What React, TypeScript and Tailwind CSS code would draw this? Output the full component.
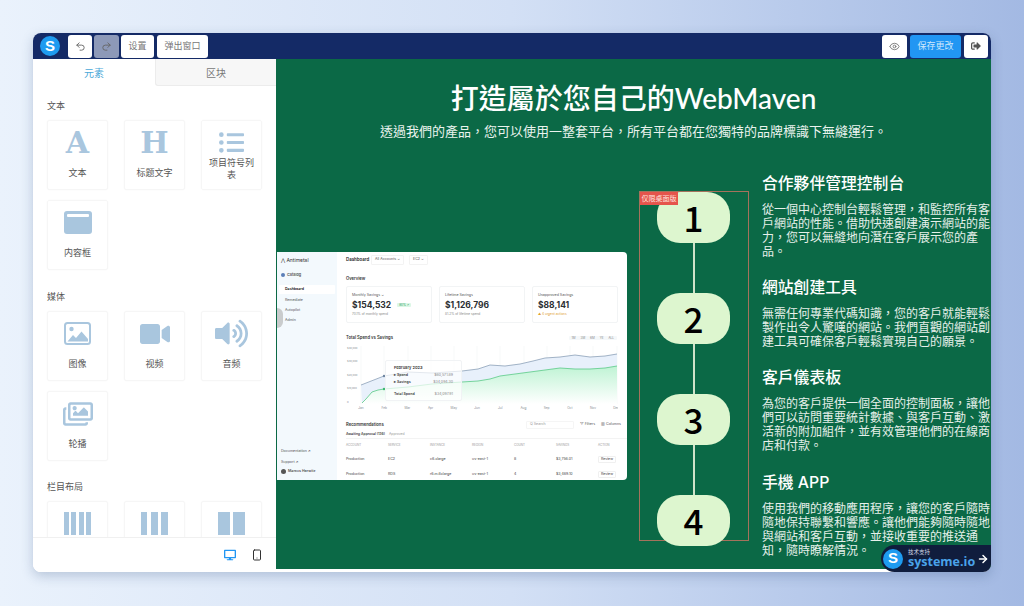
import { Smartphone, Undo2, Redo2, ArrowRight, Eye } from "lucide-react";
import { FaDesktop, FaRegImages, FaListUl, FaSignOutAlt, FaVideo, FaVolumeUp } from "react-icons/fa";
import type { ReactNode } from "react";

const iconColor = "text-[#a9c6de]";

function Logo({ size }: { size: string }) {
  return (
    <div className={`flex shrink-0 items-center justify-center rounded-full bg-[#1e9bf0] font-['Liberation_Sans',sans-serif] font-bold text-white ${size}`}>
      S
    </div>
  );
}

function ImageIcon() {
  return (
    <svg viewBox="0 0 27 23" className="h-[23px] w-[27px]" fill="currentColor">
      <rect x="1" y="1" width="25" height="21" rx="2.5" fill="none" stroke="currentColor" strokeWidth="2" />
      <circle cx="7.5" cy="7" r="2.2" />
      <path d="M3.5 19.5 L9 13 L12 16 L17.5 9.5 L24 17 V19.5 Z" />
    </svg>
  );
}

function Bars({ widths }: { widths: number[] }) {
  return (
    <div className="flex h-[23px] w-[27px] justify-between">
      {widths.map((w, i) => (
        <div key={i} className="h-full bg-[#a9c6de]" style={{ width: w }} />
      ))}
    </div>
  );
}

function Card({ icon, label }: { icon: ReactNode; label?: string }) {
  return (
    <div className="flex h-[70px] w-[61px] flex-col items-center rounded-[2px] border border-[#f6f6f6] pt-[9px] shadow-[0_0_2px_rgba(0,0,0,0.03)]">
      <div className={`flex h-[25px] items-center justify-center ${iconColor}`}>{icon}</div>
      {label && (
        <div className="mt-[12px] w-[52px] text-center text-[9px] leading-[12px] text-[#555]">{label}</div>
      )}
    </div>
  );
}

function Section({ title, children, className }: { title: string; children: ReactNode; className: string }) {
  return (
    <div className={className}>
      <div className="mb-[8px] h-[12px] text-[9px] leading-[12px] text-[#555]">{title}</div>
      <div className="grid w-[215px] grid-cols-[61px_61px_61px] gap-x-[16px] gap-y-[10px]">{children}</div>
    </div>
  );
}

function TopButton({ children, className = "bg-white text-[#777]" }: { children: ReactNode; className?: string }) {
  return (
    <div className={`flex h-[23px] items-center justify-center rounded-[3px] text-[9px] ${className}`}>{children}</div>
  );
}

function Sidebar() {
  return (
    <div className="flex h-full w-[60px] shrink-0 flex-col bg-[#f3f9fd] pb-[6px] pl-[4px] text-[3.6px] text-[#555]">
      <div className="mt-[5px] h-[6px] text-[5px] leading-[6px] text-[#333]">⋀ Antimetal</div>
      <div className="mt-[9px] flex h-[6px] items-center gap-[2px] text-[3.8px] font-semibold">
        <span className="h-[4px] w-[4px] rounded-full bg-[#5b7fb8]" /> Catalog
      </div>
      <div className="mt-[7px] -ml-[2px] flex h-[9px] w-[56px] items-center rounded-[1px] bg-white pl-[6px] font-semibold text-[#222]">Dashboard</div>
      <div className="mt-[2px] h-[8px] pl-[4px] leading-[8px]">Remediate</div>
      <div className="mt-[2px] h-[8px] pl-[4px] leading-[8px]">Autopilot</div>
      <div className="mt-[2px] h-[8px] pl-[4px] leading-[8px]">Admin</div>
      <div className="mt-auto leading-[6px]">Documentation ↗</div>
      <div className="mt-[5px] leading-[6px]">Support ↗</div>
      <div className="mt-[4px] flex items-center gap-[2px] font-semibold">
        <span className="h-[5px] w-[5px] rounded-full bg-[#555]" /> Marcus Horwitz
      </div>
    </div>
  );
}

function Stat({ label, value, note, tag, noteClass }: { label: string; value: string; note: string; tag?: string; noteClass: string }) {
  return (
    <div className="h-[37px] w-[86px] rounded-[2px] border border-[#f2f4f5] px-[5px] pt-[6px]">
      <div className="text-[3.6px] leading-[5px] text-[#555]">{label}</div>
      <div className="mt-[2px] flex items-center gap-[6px]">
        <span className="text-[8.5px] leading-[10px] font-bold text-[#2c2f33]">{value}</span>
        {tag && <span className="rounded-[1px] bg-[#dcf7e6] px-[2px] text-[3px] text-[#2a9d5c]">{tag}</span>}
      </div>
      <div className={`mt-[2px] text-[3.2px] leading-[5px] ${noteClass}`}>{note}</div>
    </div>
  );
}

function Chart() {
  const blue = "M361 385 L384 376 L408 372 L432 373 L462 371 L478 369 L490 365 L505 366 L520 364 L533 361 L545 358 L560 357 L575 355 L590 357 L605 356 L617 354";
  const green = "M362 403 L366 399 L372 392 L378 390 L384 389 L408 387 L432 384 L462 382 L478 381 L490 379 L500 376 L515 374 L530 372 L545 370 L560 368 L575 369 L590 369 L605 368 L617 366";
  return (
    <svg viewBox="346 345 272 68" className="mt-[4px] h-[68px] w-[272px] shrink-0" fontFamily="Inter" fontSize="3.2" fill="#8a8f96">
      <defs>
        <linearGradient id="greenFill" x1="0" y1="0" x2="0" y2="1">
          <stop offset="0" stopColor="#bff3d4" />
          <stop offset="1" stopColor="#ffffff" />
        </linearGradient>
      </defs>
      {[["$40,000", 349], ["$30,000", 362], ["$20,000", 376], ["$10,000", 389], ["0", 403]].map(([t, y]) => (
        <text key={t} x="347" y={y} fontSize="2.6">{t}</text>
      ))}
      {[361, 384, 408, 431, 454, 477, 500, 524, 547, 570, 593, 617].map((x) => (
        <line key={x} x1={x} x2={x} y1="346" y2="404" stroke="#eef1f3" strokeWidth="0.5" />
      ))}
      <path d={`${blue} L617 366 L605 368 L590 369 L575 369 L560 368 L545 370 L530 372 L515 374 L500 376 L490 379 L478 381 L462 382 L432 384 L408 387 L384 389 L362 403 Z`} fill="#e8f0fb" />
      <path d={`${green} L617 404 L362 404 Z`} fill="url(#greenFill)" />
      <path d={blue} fill="none" stroke="#7d93ad" strokeWidth="0.7" />
      <path d={green} fill="none" stroke="#58c987" strokeWidth="0.8" />
      {["Jan", "Feb", "Mar", "Apr", "May", "Jun", "Jul", "Aug", "Sep", "Oct", "Nov", "Dec"].map((m, i) => (
        <text key={m} x={361 + i * 23.2} y="409" textAnchor="middle">{m}</text>
      ))}
      <circle cx="384" cy="376" r="1.2" fill="#6f86a0" />
      <circle cx="384" cy="389" r="1.2" fill="#3fb873" />
    </svg>
  );
}

function ChartTooltip() {
  const items = [
    ["▸ Spend", "$60,571.89"],
    ["▸ Savings", "$34,094.30"],
  ];
  return (
    <div className="absolute left-[108px] top-[108px] flex h-[41px] w-[77px] flex-col rounded-[2px] border border-[#f1f3f5] bg-white/70 px-[8px] pt-[3px] text-[3.6px] text-[#444]">
      <div className="text-[4px] font-semibold leading-[7px] text-[#333]">February 2023</div>
      {items.map(([k, v]) => (
        <div key={k} className="mt-[1px] flex justify-between leading-[6px]">
          <span className="font-semibold">{k}</span>
          <span className="text-[#888]">{v}</span>
        </div>
      ))}
      <div className="mt-[6px] flex justify-between leading-[6px]">
        <span className="font-semibold">Total Spend</span>
        <span className="text-[#888]">$34,097.91</span>
      </div>
    </div>
  );
}

function Dashboard() {
  const columns = "grid grid-cols-[repeat(6,42px)_24px]";
  const rows = [
    ["Production", "EC2", "c6.xlarge", "us-east-1", "8", "$3,756.01"],
    ["Production", "RDS", "r6.m.6xlarge", "us-east-1", "4", "$3,469.10"],
  ];
  return (
    <div className="relative ml-[1px] mt-[79px] flex h-[228px] w-[350px] shrink-0 overflow-hidden rounded-r-[4px] bg-white font-['Inter',sans-serif]">
      <Sidebar />
      <div className="flex min-w-0 flex-1 flex-col pl-[9px]">
        <div className="mt-[3px] flex h-[10px] items-center gap-[5px] text-[3.6px] text-[#555]">
          <span className="w-[20px] text-[4.4px] font-semibold text-[#222]">Dashboard</span>
          <span className="rounded-[1px] border border-[#f3f3f3] px-[3px] py-[1px]">All Accounts ⌄</span>
          <span className="rounded-[1px] border border-[#f3f3f3] px-[3px] py-[1px]">EC2 ⌄</span>
        </div>
        <div className="mt-[11px] h-[6px] text-[4.2px] leading-[6px] font-semibold text-[#333]">Overview</div>
        <div className="mt-[4px] flex gap-[7px]">
          <Stat label="Monthly Savings ⌄" value="$154,532" tag="80% ↗" note="70.1% of monthly spend" noteClass="text-[#888]" />
          <Stat label="Lifetime Savings" value="$1,126,796" note="81.2% of lifetime spend" noteClass="text-[#888]" />
          <Stat label="Unapproved Savings" value="$88,141" note="▲ 4 urgent actions" noteClass="text-[#e0a030]" />
        </div>
        <div className="mt-[12px] flex h-[6px] items-center justify-between pr-[10px]">
          <span className="text-[4.2px] font-semibold text-[#333]">Total Spend vs Savings</span>
          <span className="flex gap-[5px] rounded-[1px] bg-[#f5f8fa] px-[3px] text-[3px] text-[#888]">
            <span>1M</span><span>3M</span><span>6M</span><span>YE</span><span>ALL</span>
          </span>
        </div>
        <Chart />
        <div className="mt-[9px] flex h-[6px] items-center justify-between pr-[6px]">
          <span className="text-[4.2px] font-semibold text-[#333]">Recommendations</span>
          <span className="flex items-center gap-[6px] text-[3.6px] text-[#555]">
            <span className="w-[48px] rounded-[1px] border border-[#f5f5f5] pl-[3px] text-[#999]">Q Search</span>
            <span>▽ Filters</span>
            <span>▥ Columns</span>
          </span>
        </div>
        <div className="mt-[3px] flex h-[8px] items-center gap-[4px] border-b border-[#f3f3f3] text-[3.4px] text-[#999]">
          <span className="font-semibold text-[#444]">Awaiting Approval (136)</span>
          <span>Approved</span>
        </div>
        <div className={`${columns} mt-[3px] h-[6px] text-[3px] leading-[6px] text-[#999]`}>
          {["ACCOUNT", "SERVICE", "INSTANCE", "REGION", "COUNT", "SAVINGS", "ACTION"].map((h) => (
            <span key={h}>{h}</span>
          ))}
        </div>
        {rows.map((row, i) => (
          <div key={i} className={`${columns} mt-[8px] h-[7px] items-center text-[3.6px] text-[#444]`}>
            {row.map((c, j) => (
              <span key={j}>{c}</span>
            ))}
            <span className="w-[18px] rounded-[1px] border border-[#f0f0f0] text-center">Review</span>
          </div>
        ))}
      </div>
      <ChartTooltip />
      <div className="absolute left-0 top-[56px] h-[20px] w-[6px] rounded-r-full bg-[#c9cccd]" />
    </div>
  );
}

function Step({ n, line }: { n: number; line: boolean }) {
  return (
    <>
      <div className="flex h-[51px] w-[73px] shrink-0 items-center justify-center rounded-[23px] bg-[#ddf6cf] font-['Noto_Sans_CJK_TC',sans-serif] text-[35px] font-medium text-black">
        {n}
      </div>
      {line && <div className="h-[50px] w-[2px] shrink-0 bg-[#cfe3c9]" />}
    </>
  );
}

const features = [
  {
    title: "合作夥伴管理控制台",
    body: "從一個中心控制台輕鬆管理\uFF0C和監控所有客戶網站的性能。借助快速創建演示網站的能力\uFF0C您可以無縫地向潛在客戶展示您的產品。",
    className: "",
  },
  {
    title: "網站創建工具",
    body: "無需任何專業代碼知識\uFF0C您的客戶就能輕鬆製作出令人驚嘆的網站。我們直觀的網站創建工具可確保客戶輕鬆實現自己的願景。",
    className: "mt-[19px]",
  },
  {
    title: "客戶儀表板",
    body: "為您的客戶提供一個全面的控制面板\uFF0C讓他們可以訪問重要統計數據、與客戶互動、激活新的附加組件\uFF0C並有效管理他們的在線商店和付款。",
    className: "mt-[19px]",
  },
  {
    title: "手機 APP",
    body: "使用我們的移動應用程序\uFF0C讓您的客戶隨時隨地保持聯繫和響應。讓他們能夠隨時隨地與網站和客戶互動\uFF0C並接收重要的推送通知\uFF0C隨時瞭解情況。",
    className: "mt-[20px]",
  },
];

const subtitle = "透過我們的產品\uFF0C您可以使用一整套平台\uFF0C所有平台都在您獨特的品牌標識下無縫運行。";

export default function App() {
  return (
    <div className="h-[606px] w-full overflow-hidden bg-linear-to-r from-[#eaf2fc] via-[#d3e0f5] to-[#a3b9e3] px-[33px] pt-[33px] font-['Noto_Sans_CJK_SC',sans-serif]">
      <div className="relative flex h-[539px] w-[958px] flex-col overflow-hidden rounded-[8px] bg-white shadow-[0_4px_12px_rgba(40,70,120,0.25)]">
        <header className="flex h-[26px] shrink-0 items-center bg-[#142a66] pl-[7px] pr-[3px]">
          <Logo size="h-[20px] w-[20px] text-[15px]" />
          <div className="ml-[8px] flex gap-[2px]">
            <TopButton className="w-[24px] bg-white text-[#666]"><Undo2 size={11} /></TopButton>
            <TopButton className="w-[25px] bg-[#8d99b8] text-[#666]"><Redo2 size={11} /></TopButton>
            <TopButton className="w-[33px] bg-white text-[#777]">设置</TopButton>
            <TopButton className="ml-[1px] w-[51px] bg-white text-[#777]">弹出窗口</TopButton>
          </div>
          <div className="ml-auto flex gap-[3px]">
            <TopButton className="w-[25px] bg-white text-[#777]"><Eye size={11} /></TopButton>
            <TopButton className="w-[51px] bg-[#2196f3] text-[#cfe8fb]">保存更改</TopButton>
            <TopButton className="w-[24px] bg-white text-[#555]"><FaSignOutAlt size={10} /></TopButton>
          </div>
        </header>

        <div className="flex min-h-0 flex-1">
          <aside className="flex w-[243px] shrink-0 flex-col bg-white">
            <div className="flex h-[27px] shrink-0 text-[10px]">
              <div className="flex w-[122px] items-center justify-center text-[#4aa8d8]">元素</div>
              <div className="flex flex-1 items-center justify-center rounded-bl-[3px] border-b border-l border-[#ececec] bg-[#f7f7f7] text-[#777]">区块</div>
            </div>
            <div className="min-h-0 flex-1 overflow-hidden pl-[14px]">
              <Section title="文本" className="mt-[14px]">
                <Card icon={<span className="font-['DejaVu_Serif',serif] text-[30px] leading-none font-bold">A</span>} label="文本" />
                <Card icon={<span className="font-['DejaVu_Serif',serif] text-[30px] leading-none font-bold">H</span>} label="标题文字" />
                <div className="flex h-[70px] w-[61px] flex-col items-center rounded-[2px] border border-[#f6f6f6] pt-[9px] shadow-[0_0_2px_rgba(0,0,0,0.03)]">
                  <FaListUl size={25} className={iconColor} />
                  <div className="mt-[2px] w-[50px] text-center text-[9px] leading-[12px] text-[#555]">项目符号列表</div>
                </div>
                <Card
                  icon={
                    <div className="h-[23px] w-[28px] rounded-[3px] bg-[#a9c6de] px-[3px] pt-[3px]">
                      <div className="h-[3px] rounded-[1px] bg-white" />
                    </div>
                  }
                  label="内容框"
                />
              </Section>
              <Section title="媒体" className="mt-[21px]">
                <Card icon={<ImageIcon />} label="图像" />
                <Card icon={<FaVideo size={30} />} label="视频" />
                <Card icon={<FaVolumeUp size={33} />} label="音频" />
                <Card icon={<FaRegImages size={30} />} label="轮播" />
              </Section>
              <Section title="栏目布局" className="mt-[20px]">
                <Card icon={<Bars widths={[5, 5, 5, 5]} />} />
                <Card icon={<Bars widths={[6, 7, 7]} />} />
                <Card icon={<Bars widths={[12, 12]} />} />
              </Section>
            </div>
            <div className="flex h-[35px] shrink-0 items-center justify-end gap-[15px] border-t border-[#f0f0f0] bg-white pr-[13px]">
              <FaDesktop size={12} className="text-[#2196f3]" />
              <Smartphone size={12} className="text-[#333]" />
            </div>
          </aside>

          <main className="flex h-[510px] min-w-0 flex-1 flex-col bg-[#0b6946] text-white">
            <h1 className="mt-[22px] text-center font-['Lato','Noto_Sans_CJK_TC',sans-serif] text-[28px] leading-[34px] font-medium">
              打造屬於您自己的WebMaven
            </h1>
            <p className="mt-[7px] text-center font-['Noto_Sans_CJK_TC',sans-serif] text-[13px] leading-[18px] text-[#eaf3ee]">
              {subtitle}
            </p>
            <div className="mt-[33px] flex items-start">
              <Dashboard />
              <div className="relative ml-[12px] mt-[18px] flex h-[350px] w-[110px] shrink-0 flex-col items-center border border-[#a5725c] pr-[1px]">
                <Step n={1} line />
                <Step n={2} line />
                <Step n={3} line />
                <Step n={4} line={false} />
                <div className="absolute left-0 top-0 flex h-[13px] w-[38px] items-center justify-center bg-[#e5544c] text-[7px] text-[#ffe3df]">
                  仅限桌面版
                </div>
              </div>
              <div className="ml-[13px] w-[228px] shrink-0 font-['Noto_Sans_CJK_TC',sans-serif]">
                {features.map((f) => (
                  <div key={f.title} className={f.className}>
                    <h2 className="font-['Inter','Noto_Sans_CJK_TC',sans-serif] text-[15.8px] leading-[22px] font-medium">{f.title}</h2>
                    <p className="mt-[7px] text-[12px] leading-[14px] text-[#e6f0ea]">{f.body}</p>
                  </div>
                ))}
              </div>
            </div>
          </main>
        </div>

        <div className="absolute bottom-0 right-0 flex h-[27px] w-[110px] items-center rounded-l-full rounded-tr-[8px] bg-[#101d3d] pl-[2px]">
          <Logo size="h-[20px] w-[20px] text-[15px]" />
          <div className="ml-[5px] flex w-[66px] shrink-0 flex-col gap-[1px]">
            <span className="text-[5.5px] leading-[6px] text-[#d5dbe8]">技术支持</span>
            <span className="font-['Open_Sans',sans-serif] text-[12.5px] leading-[12px] font-bold text-[#4aa3ea]">systeme.io</span>
          </div>
          <ArrowRight size={12} strokeWidth={3} className="ml-[3px] shrink-0 text-white" />
        </div>
      </div>
    </div>
  );
}
